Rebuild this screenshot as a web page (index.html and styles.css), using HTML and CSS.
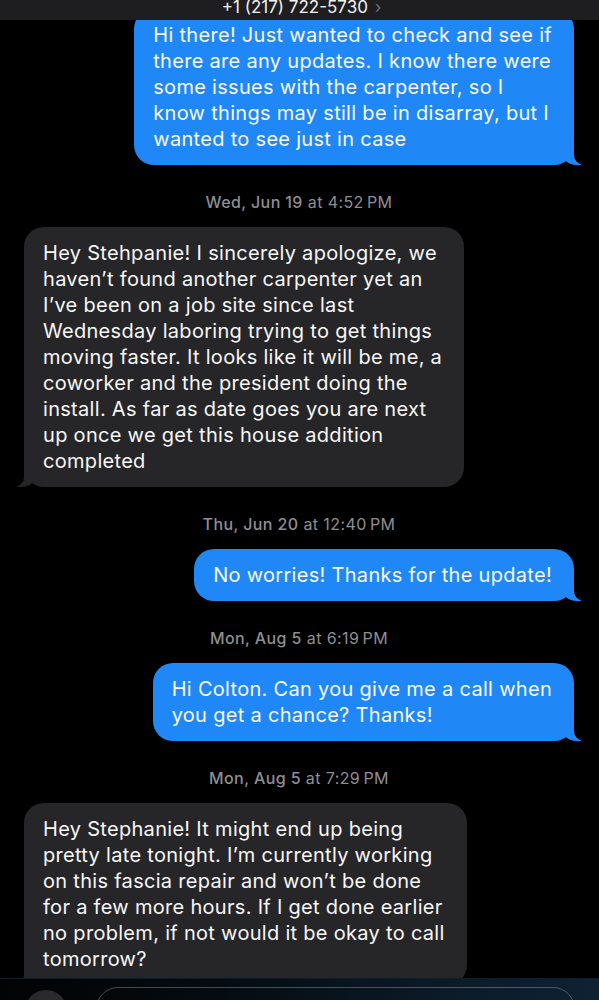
FILE: index.html
```html
<!DOCTYPE html>
<html lang="en">
<head>
  <meta charset="UTF-8" />
  <meta name="viewport" content="width=device-width, initial-scale=1" />
  <title>Messages</title>
  <link rel="stylesheet" href="styles.css">
</head>
<body>

  <header class="contact-bar">
    <div class="caller">+1 (217) 722-5730 <span class="chev">&#8250;</span></div>
  </header>

  <main class="thread">
    <div class="msg sent">
      Hi there! Just wanted to check and see if<br>
      there are any updates. I know there were<br>
      some issues with the carpenter, so I<br>
      know things may still be in disarray, but I<br>
      wanted to see just in case
    </div>

    <div class="stamp"><b>Wed, Jun 19</b> at 4:52&#8239;PM</div>

    <div class="msg recv">
      Hey Stehpanie! I sincerely apologize, we<br>
      haven’t found another carpenter yet an<br>
      I’ve been on a job site since last<br>
      Wednesday laboring trying to get things<br>
      moving faster. It looks like it will be me, a<br>
      coworker and the president doing the<br>
      install. As far as date goes you are next<br>
      up once we get this house addition<br>
      completed
    </div>

    <div class="stamp"><b>Thu, Jun 20</b> at 12:40&#8239;PM</div>

    <div class="msg sent">No worries! Thanks for the update!</div>

    <div class="stamp"><b>Mon, Aug 5</b> at 6:19&#8239;PM</div>

    <div class="msg sent">
      Hi Colton. Can you give me a call when<br>
      you get a chance? Thanks!
    </div>

    <div class="stamp"><b>Mon, Aug 5</b> at 7:29&#8239;PM</div>

    <div class="msg recv">
      Hey Stephanie! It might end up being<br>
      pretty late tonight. I’m currently working<br>
      on this fascia repair and won’t be done<br>
      for a few more hours. If I get done earlier<br>
      no problem, if not would it be okay to call<br>
      tomorrow?
    </div>
  </main>

  <footer class="composer">
    <span class="plus"></span>
    <div class="field"></div>
  </footer>

</body>
</html>
```

FILE: styles.css
```css
* {
  margin: 0; padding: 0; box-sizing: border-box;
}
body {
  font-family: 'Inter', 'Liberation Sans', sans-serif;
  background-color: #000;
  color: white;
  overflow: hidden;
  height: 1000px;
}

/* top bar, mostly scrolled off */
.contact-bar {
  position: fixed;
  top: 0; left: 0; right: 0;
  height: 20px;
  background-color: #1e1e20;
  overflow: hidden;
  display: flex;
  justify-content: center;
  z-index: 10;
}
.caller {
  margin-top: -3px;
  margin-left: 4px;
  font-size: 17px;
  line-height: 20px;
  color: #f2f2f2;
  white-space: nowrap;
}
.chev {
  color: #6d6d72;
  margin-left: 2px;
}

.thread {
  display: flex;
  flex-direction: column;
  padding: 9px 25px 0 24px;
}
.msg {
  position: relative;
  font-size: 20px;
  line-height: 26px;
  letter-spacing: 0.3px;
  padding: 13px 22px 13px 19px;
  border-radius: 20px;
  white-space: nowrap;
  color: #f7f7f7;
}
.msg.sent {
  align-self: flex-end;
  background-color: #1f88f6;
}
.msg.recv {
  align-self: flex-start;
  background-color: #262628;
}

/* bubble tails */
.msg::before,
.msg::after {
  content: "";
  position: absolute;
  bottom: 0;
  height: 22px;
}
.msg.sent::before {
  right: -7px;
  width: 20px;
  background-color: #1f88f6;
  border-bottom-left-radius: 16px 14px;
}
.msg.sent::after {
  right: -26px;
  width: 26px;
  background-color: #000;
  border-bottom-left-radius: 10px;
}
.msg.recv::before {
  left: -7px;
  width: 20px;
  background-color: #262628;
  border-bottom-right-radius: 16px 14px;
}
.msg.recv::after {
  left: -26px;
  width: 26px;
  background-color: #000;
  border-bottom-right-radius: 10px;
}

.stamp {
  align-self: center;
  margin: 28px 0 16px;
  font-size: 16px;
  line-height: 18px;
  letter-spacing: 0.4px;
  color: #8e8e93;
  white-space: nowrap;
}
.stamp b {
  font-weight: 500;
}

/* composer strip at the bottom edge */
.composer {
  position: fixed;
  left: 0; right: 0; bottom: 0;
  height: 22px;
  background: linear-gradient(90deg, #020304 0%, #050b10 35%, #0b1b28 75%, #0e2232 100%);
  border-top: 1px solid #0f1d29;
  overflow: hidden;
  z-index: 10;
}
.plus {
  position: absolute;
  left: 25px;
  top: 11px;
  width: 42px;
  height: 42px;
  border-radius: 50%;
  background-color: #2a2a2d;
}
.field {
  position: absolute;
  left: 96px;
  right: 24px;
  top: 8px;
  height: 44px;
  border: 1px solid rgba(190, 200, 210, 0.35);
  border-radius: 22px;
}
```
